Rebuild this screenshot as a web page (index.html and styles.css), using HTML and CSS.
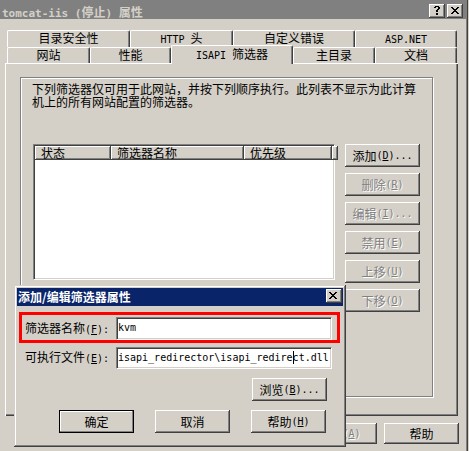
FILE: index.html
```html
<!DOCTYPE html>
<html lang="zh-CN">
<head>
<meta charset="utf-8">
<title>tomcat-iis (停止) 属性</title>
<link rel="stylesheet" href="styles.css">
</head>
<body>
<div class="win">
  <div class="caption">
    <span class="cap-title"><span class="a">tomcat-iis (</span>停止<span class="a">) </span>属性</span>
    <div class="cbtns">
      <span class="cbtn q"><svg width="6" height="9" viewBox="0 0 6 9"><path d="M1 0h4v1h-4z M0 1h2v1h-2z M4 1h2v1h-2z M4 2h2v1h-2z M3 3h2v1h-2z M2 4h2v2h-2z M2 7h2v2h-2z" fill="#000"/></svg></span>
      <span class="cbtn x"><svg width="8" height="7" viewBox="0 0 8 7"><path d="M0 0h2v1h-2z M6 0h2v1h-2z M1 1h2v1h-2z M5 1h2v1h-2z M2 2h4v1h-4z M3 3h2v1h-2z M2 4h4v1h-4z M1 5h2v1h-2z M5 5h2v1h-2z M0 6h2v1h-2z M6 6h2v1h-2z" fill="#000"/></svg></span>
    </div>
  </div>
  <div class="client">
    <div class="tabs">
      <div class="tabrow row1">
        <div class="tab w123">目录安全性</div>
        <div class="tab w103"><span class="a">HTTP </span>头</div>
        <div class="tab w122">自定义错误</div>
        <div class="tab w102"><span class="a">ASP.NET</span></div>
      </div>
      <div class="tabrow row2">
        <div class="tab w83">网站</div>
        <div class="tab w81">性能</div>
        <div class="tab w122 sel"><span class="a">ISAPI </span>筛选器</div>
        <div class="tab w82">主目录</div>
        <div class="tab w82">文档</div>
      </div>
    </div>
    <div class="panel">
      <div class="frame">
        <p class="desc">下列筛选器仅可用于此网站，并按下列顺序执行。此列表不显示为此计算<br>机上的所有网站配置的筛选器。</p>
        <div class="listarea">
          <div class="list">
            <div class="lhead">
              <div class="hc c1">状态</div>
              <div class="hc c2">筛选器名称</div>
              <div class="hc c3">优先级</div>
              <div class="hc fill"></div>
            </div>
          </div>
          <div class="btncol">
            <div class="btn">添加<span class="a">(<u>D</u>)...</span></div>
            <div class="btn dis">删除<span class="a">(<u>R</u>)</span></div>
            <div class="btn dis">编辑<span class="a">(<u>I</u>)...</span></div>
            <div class="btn dis">禁用<span class="a">(<u>E</u>)</span></div>
            <div class="btn dis">上移<span class="a">(<u>U</u>)</span></div>
            <div class="btn dis">下移<span class="a">(<u>O</u>)</span></div>
          </div>
        </div>
      </div>
    </div>
    <div class="footer">
      <div class="btn">确定</div>
      <div class="btn">取消</div>
      <div class="btn dis">应用<span class="a">(<u>A</u>)</span></div>
      <div class="btn">帮助</div>
    </div>
  </div>

  <div class="dlg">
    <div class="dlg-cap">
      <span class="dlg-title">添加/编辑筛选器属性</span>
      <span class="cbtn x"><svg width="8" height="7" viewBox="0 0 8 7"><path d="M0 0h2v1h-2z M6 0h2v1h-2z M1 1h2v1h-2z M5 1h2v1h-2z M2 2h4v1h-4z M3 3h2v1h-2z M2 4h4v1h-4z M1 5h2v1h-2z M5 5h2v1h-2z M0 6h2v1h-2z M6 6h2v1h-2z" fill="#000"/></svg></span>
    </div>
    <div class="hl">
      <label class="lbl">筛选器名称<span class="a">(<u>F</u>):</span></label>
      <div class="inp"><span class="val">kvm</span></div>
    </div>
    <div class="field">
      <label class="lbl">可执行文件<span class="a">(<u>E</u>):</span></label>
      <div class="inp short"><span class="val">isapi_redirector\isapi_redire<span class="caret"></span>ct.dll</span></div>
    </div>
    <div class="browse-row">
      <div class="btn">浏览<span class="a">(<u>B</u>)...</span></div>
    </div>
    <div class="dlg-btns">
      <div class="btn def">确定</div>
      <div class="btn">取消</div>
      <div class="btn">帮助<span class="a">(<u>H</u>)</span></div>
    </div>
  </div>
</div>
</body>
</html>
```
FILE: styles.css
```css
* { box-sizing: border-box; margin: 0; padding: 0; }
html, body { width: 469px; height: 451px; overflow: hidden; }
body {
  background: #d4d0c8;
  font-family: "Noto Sans CJK SC", "Noto Sans", sans-serif;
  font-size: 12px;
  line-height: 14px;
  color: #000;
}
.a { font-family: "DejaVu Sans Mono", "Liberation Mono", monospace; font-size: 10px; }

.win {
  position: relative;
  width: 468px;
  height: 451px;
  box-shadow: inset -1px 0 #404040, inset -2px 0 #808080;
}

/* caption */
.caption {
  display: flex;
  align-items: flex-start;
  width: 466px;
  height: 19px;
  background: #808080;
  padding: 0 3px 0 2px;
}
.cap-title {
  flex: 1;
  padding-top: 5px;
  font-weight: bold;
  color: #d4d0c8;
  white-space: nowrap;
}
.cap-title .a { font-size: 11px; }
.cbtns { display: flex; gap: 2px; margin-top: 4px; }
.cbtn {
  display: block;
  width: 16px;
  height: 14px;
  background: #d4d0c8;
  box-shadow: inset -1px -1px #404040, inset 1px 1px #fff, inset -2px -2px #808080;
}
.cbtn svg { display: block; }
.cbtn.q svg { margin: 2px 0 0 5px; }
.cbtn.x svg { margin: 3px 0 0 4px; }

/* client */
.client { padding: 11px 0 0 5px; }
.tabs { height: 33px; padding-left: 2px; }
.tabrow { display: flex; }
.tab {
  flex: none;
  height: 17px;
  border: 1px solid #fff;
  border-bottom: 0;
  border-right-color: #404040;
  border-radius: 2px 2px 0 0;
  box-shadow: inset -1px 0 #808080;
  background: #d4d0c8;
  text-align: center;
  white-space: nowrap;
}
.row2 .tab { height: 16px; }
.row2 .tab.sel {
  height: 19px;
  margin-top: -2px;
  padding-top: 1px;
  position: relative;
  z-index: 2;
}
.w123 { width: 123px; }
.w122 { width: 122px; }
.w103 { width: 103px; }
.w102 { width: 102px; }
.w83 { width: 83px; }
.w82 { width: 82px; }
.w81 { width: 81px; }

.panel {
  width: 453px;
  height: 353px;
  border-left: 1px solid #fff;
  border-top: 1px solid #fff;
  box-shadow: inset -1px -1px #404040, inset -2px -2px #808080;
  padding: 13px 0 0 14px;
}
.frame {
  width: 413px;
  height: 320px;
  border: 1px solid #808080;
  box-shadow: 1px 1px 0 #fff, inset 1px 1px 0 #fff;
  padding: 4px 0 0 11px;
}
.desc { line-height: 13px; white-space: nowrap; }

.listarea { display: flex; align-items: flex-start; margin: 36px 0 0 1px; }
.list {
  flex: none;
  width: 302px;
  height: 136px;
  background: #fff;
  border: 1px solid;
  border-color: #808080 #fff #fff #808080;
  box-shadow: inset 1px 1px #404040, inset -1px -1px #d4d0c8;
  padding: 1px;
}
.lhead { display: flex; height: 14px; }
.hc {
  flex: none;
  height: 14px;
  padding-left: 6px;
  background: #d4d0c8;
  box-shadow: inset -1px -1px #404040, inset 1px 1px #fff, inset -2px -2px #808080;
  white-space: nowrap;
}
.c1 { width: 76px; }
.c2 { width: 133px; }
.c3 { width: 88px; }
.hc.fill { flex: 1; }

.btncol { display: flex; flex-direction: column; gap: 6px; margin-left: 10px; }
.btn {
  flex: none;
  width: 75px;
  height: 23px;
  display: flex;
  align-items: center;
  justify-content: center;
  background: #d4d0c8;
  box-shadow: inset -1px -1px #404040, inset 1px 1px #fff, inset -2px -2px #808080;
  white-space: nowrap;
}
.btn.dis { color: #808080; text-shadow: 1px 1px 0 #fff; }
.btn.def {
  border: 1px solid #000;
  box-shadow: inset -1px -1px #808080, inset 1px 1px #fff;
}

.footer {
  display: flex;
  justify-content: flex-end;
  gap: 7px;
  width: 454px;
  margin-top: 7px;
}
.footer .btn { height: 21px; }

/* sub dialog */
.dlg {
  position: absolute;
  left: 14px;
  top: 285px;
  width: 332px;
  height: 162px;
  background: #d4d0c8;
  padding: 3px;
  box-shadow: inset -1px -1px #404040, inset 1px 1px #d4d0c8, inset -2px -2px #808080, inset 2px 2px #fff;
  z-index: 5;
}
.dlg-cap {
  display: flex;
  align-items: flex-start;
  height: 18px;
  background: #0a246a;
  color: #fff;
  font-weight: bold;
  padding-left: 1px;
}
.dlg-title { flex: 1; line-height: 18px; white-space: nowrap; }
.dlg-cap .cbtn { margin: 1px 1px 0 0; }
.dlg-cap .cbtn.x svg { margin: 3px 0 0 3px; }

.hl {
  display: flex;
  align-items: center;
  width: 321px;
  height: 31px;
  margin: 6px 0 0 2px;
  border: 3px solid #f00;
  padding: 2px 0 0 3px;
}
.field {
  display: flex;
  align-items: center;
  height: 22px;
  margin: 4px 0 0 8px;
}
.lbl { flex: none; width: 91px; white-space: nowrap; }
.inp {
  flex: none;
  width: 216px;
  height: 23px;
  background: #fff;
  border: 1px solid;
  border-color: #808080 #fff #fff #808080;
  box-shadow: inset 1px 1px #404040, inset -1px -1px #d4d0c8;
  padding: 0 0 1px 1px;
  display: flex;
  align-items: center;
  overflow: hidden;
  white-space: nowrap;
}
.inp.short { height: 22px; }
.val { font-family: "DejaVu Sans Mono", "Liberation Mono", monospace; font-size: 10px; line-height: 12px; }
.caret {
  display: inline-block;
  width: 1px;
  height: 13px;
  background: #000;
  margin-right: -1px;
  vertical-align: -3px;
}
.browse-row { display: flex; justify-content: flex-end; padding-right: 16px; margin-top: 9px; }
.dlg-btns { display: flex; gap: 21px; margin: 9px 0 0 42px; }
```
